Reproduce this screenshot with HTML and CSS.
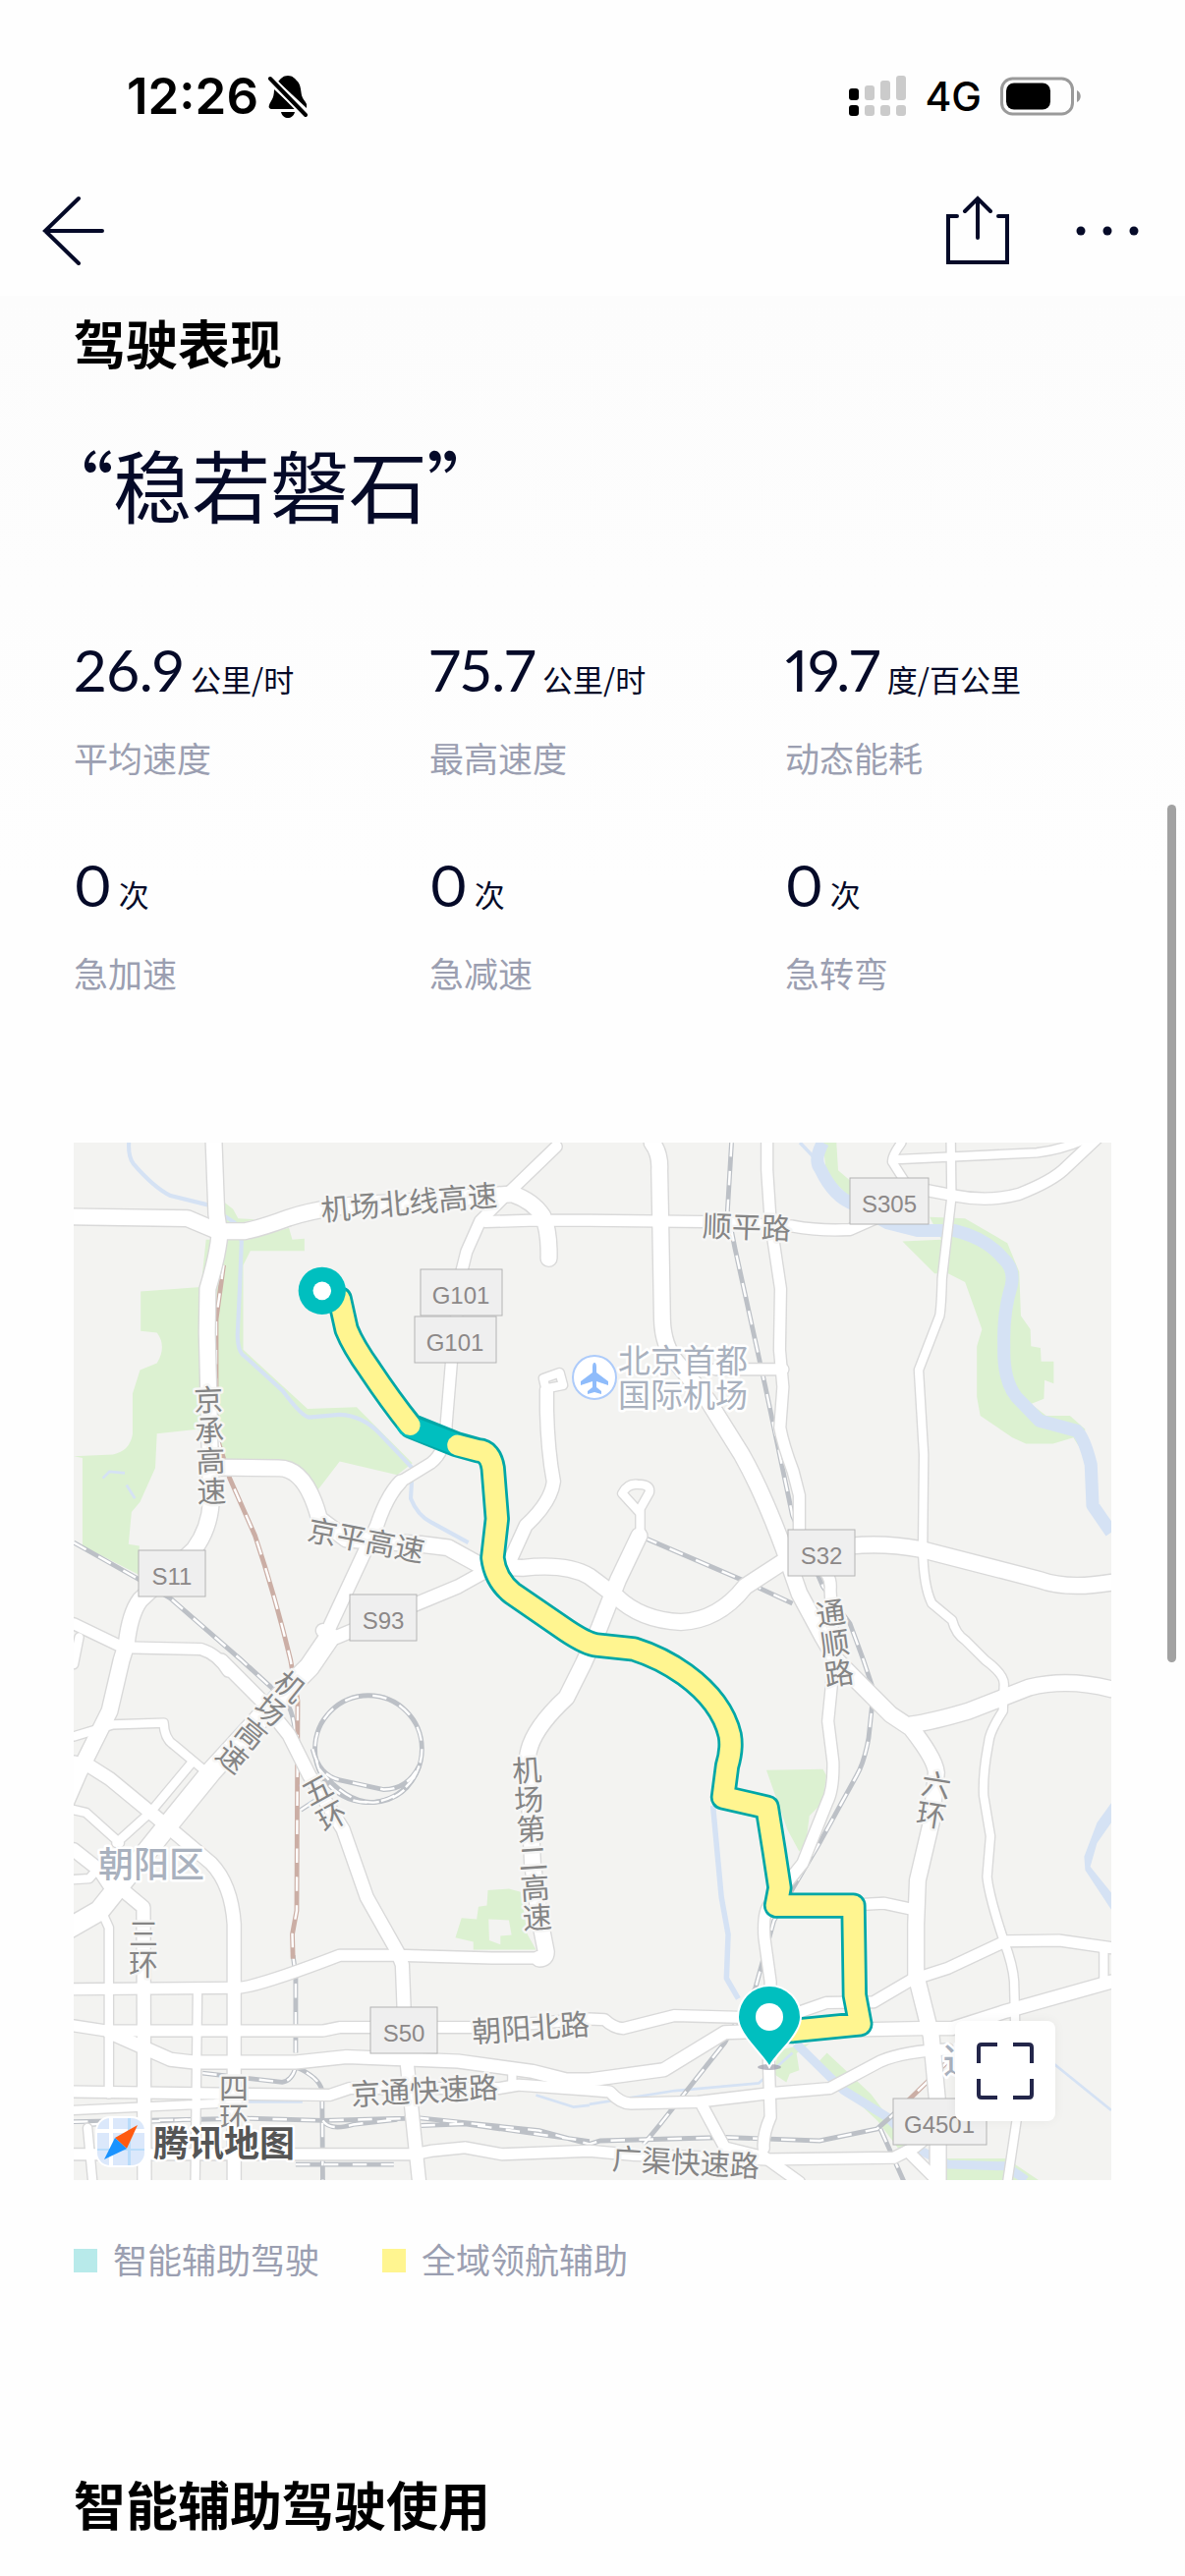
FILE: index.html
```html
<!DOCTYPE html>
<html lang="zh-CN">
<head>
<meta charset="utf-8">
<meta name="viewport" content="width=device-width, initial-scale=1">
<title>驾驶表现</title>
<link rel="stylesheet" href="styles.css">
</head>
<body>
<header class="top">
  <div class="status">
    <div class="status-left">
      <span class="clock">12:26</span>
      <svg class="bell" viewBox="0 0 40 44" aria-hidden="true">
        <path d="M10 7C13 4 15 1 20 1s7 3 10 6c3 4 3 8 4 14 1 4 4 6 5 9v4L10 7z"/>
        <path d="M6 15l22 20H4c-3 0-4-2-3-4 1-4 5-6 5-16zM13 38h14c-1 4-4 6-7 6s-6-2-7-6z"/>
        <path class="bell-gap" d="M2 4l36 37"/>
        <path class="bell-slash" d="M2 4l36 37"/>
      </svg>
    </div>
    <div class="status-right">
      <svg class="signal" viewBox="0 0 58 42" aria-hidden="true">
        <g fill="#000"><rect y="13" width="10" height="12" rx="3"/><rect y="30" width="10" height="11" rx="3"/></g>
        <g fill="#cbcbcb"><rect x="16" y="10" width="10" height="15" rx="3"/><rect x="16" y="30" width="10" height="11" rx="3"/><rect x="32" y="5" width="10" height="20" rx="3"/><rect x="32" y="30" width="10" height="11" rx="3"/><rect x="48" width="10" height="25" rx="3"/><rect x="48" y="30" width="10" height="11" rx="3"/></g>
      </svg>
      <span class="network">4G</span>
      <svg class="battery" viewBox="0 0 82 40" aria-hidden="true">
        <rect x="1.5" y="2" width="72" height="36" rx="11" fill="none" stroke="#9a9a9a" stroke-width="3"/>
        <rect x="6" y="6.5" width="45" height="27" rx="8"/>
        <path d="M78 14c5 2 5 10 0 12z" fill="#9a9a9a"/>
      </svg>
    </div>
  </div>
  <nav class="nav">
    <button class="icon-btn" type="button" aria-label="返回">
      <svg width="64" height="72" viewBox="0 0 64 72"><path d="M38 3L4 36l34 33M4 36h58"/></svg>
    </button>
    <div class="nav-actions">
      <button class="icon-btn" type="button" aria-label="分享">
        <svg width="66" height="72" viewBox="0 0 66 72"><path d="M12 21H3v47h60V21H54M33 43V4M20 16L33 3l13 13"/></svg>
      </button>
      <button class="icon-btn" type="button" aria-label="更多">
        <svg width="66" height="72" viewBox="0 0 66 72"><g class="dots"><circle cx="6" cy="36" r="4.5"/><circle cx="33" cy="36" r="4.5"/><circle cx="60" cy="36" r="4.5"/></g></svg>
      </button>
    </div>
  </nav>
</header>

<main class="page">
  <h1 class="heading">驾驶表现</h1>
  <p class="verdict">“稳若磐石”</p>

  <dl class="stats">
    <div class="stat"><dt>平均速度</dt><dd>26.9<small>公里/时</small></dd></div>
    <div class="stat"><dt>最高速度</dt><dd>75.7<small>公里/时</small></dd></div>
    <div class="stat"><dt>动态能耗</dt><dd>19.7<small>度/百公里</small></dd></div>
    <div class="stat"><dt>急加速</dt><dd>0<small>次</small></dd></div>
    <div class="stat"><dt>急减速</dt><dd>0<small>次</small></dd></div>
    <div class="stat"><dt>急转弯</dt><dd>0<small>次</small></dd></div>
  </dl>

  <section class="map" aria-label="行程地图">
    <svg class="map-canvas" viewBox="0 0 1056 1056">
      <defs>
        <g id="roads">
          <g class="w22">
            <path d="M2636 38L2638 200L2610 440Q2608 520 2603 550L2541 710L2556 960L2553 1240Q2555 1350 2580 1400L2640 1450Q2650 1490 2680 1510L2738 1568Q2795 1610 2793 1640L2790 1718Q2750 1780 2748 1810Q2730 1900 2733 1968L2753 2088L2743 2208Q2750 2270 2793 2398Q2820 2470 2823 2518L2826 2638L2830 2930L2803 3110"/>
            <path d="M2490 38Q2460 80 2463 95L2498 150M2473 88L2890 68Q2960 60 3030 30"/>
            <path d="M44 1793L160 1758L310 1753Q312 1800 340 1818L430 1893"/>
            <path d="M395 1868L270 2018L170 2108M44 2010L80 2018L180 2108M44 2216L90 2213L120 2178"/>
            <path d="M130 2318L148 2358V2850M410 2536L408 2698L403 3110M44 2898L460 2878L530 2868M1340 2783V2828M85 2950L100 3110M60 1500L44 1580"/>
            <path d="M1715 1130L1665 1075Q1680 1045 1710 1048Q1750 1048 1745 1072L1718 1120V1200"/>
            <path d="M1440 770L1432 735L1480 718L1490 755L1440 765"/>
            <path d="M3088 2430V2520"/>
          </g>
          <g class="w30">
            <path d="M44 2648L140 2663L780 2663L830 2653L1250 2653L1568 2628L1613 2630Q1640 2655 1668 2656L1818 2618L2008 2623L2188 2608L2268 2580L2408 2578L2518 2513L2628 2478L2798 2398L2958 2396L3110 2418"/>
            <path d="M44 2843L800 2853L860 2833L1300 2833L1360 2823L1568 2838L1628 2843Q1660 2878 1690 2878L1888 2873L2098 2848L2278 2833L2428 2753Q2500 2723 2628 2718"/>
            <path d="M44 2540L520 2536Q570 2540 830 2440L1000 2440L1280 2448H1440"/>
            <path d="M44 3028H1050L1100 3018L1200 3008L1310 3028L1568 3018L1700 3030L2088 3043L2468 3038L2528 3008L2600 2950"/>
            <path d="M1898 2878L1968 3008L2088 3038L2188 3110M2508 3018L2600 3110"/>
            <path d="M2368 2290L2438 2286L2518 2303M1940 708H2140"/>
            <path d="M2093 38L2093 120L2103 270L2133 470L2130 650L2140 760L2131 880Q2140 930 2170 1010L2188 1080V1220L2240 1290Q2285 1310 2280 1360L2290 1560L2283 1648L2273 1748L2288 1868Q2290 1950 2270 1988L2198 2168L2100 2290Q2080 2310 2085 2388L2103 2518L2098 2758L2103 2918Q2080 2970 2083 3010"/>
            <path d="M1260 272L1390 268H1568L1908 272L2168 285Q2250 300 2338 295L2440 250M2560 178L2648 195Q2748 215 2838 190Q2940 150 2978 110L3068 25"/>
            <path d="M1470 50L1330 185L1245 270L1205 360L1190 420L1160 690L1145 870Q1145 950 1100 985L1010 1040"/>
            <path d="M44 1460L190 1530L420 1535Q470 1550 500 1600"/>
          </g>
          <g class="w38">
            <path d="M190 2248L250 2298L253 3110"/>
            <path d="M44 1870L90 1880L150 1918L320 2058L450 2168Q510 2230 518 2348V3110"/>
            <path d="M150 2668L330 2748L400 2756L700 2756L850 2740L1180 2753L1400 2783L1500 2808H1568L1788 2778L1968 2668L2028 2666L2548 2656L2640 2656L2800 2605L3110 2518"/>
            <path d="M1010 1040Q970 1080 940 1170L800 1470M1270 1300L1180 1350L1060 1400L820 1500L780 1480"/>
            <path d="M480 1568L600 1688L680 1788L740 1908L840 2068L910 2268L1000 2428L1015 2468L1020 2598L1030 2768L1050 2968L1065 3110"/>
            <path d="M44 2128L120 2188L160 2248"/>
            <path d="M1442 770V830Q1445 950 1462 1040Q1455 1100 1380 1170L1330 1280"/>
          </g>
          <g class="w46">
            <path d="M458 38L466 250L475 310Q470 370 440 470L438 600L442 760L450 1100Q445 1180 400 1240L240 1390Q210 1430 200 1520L185 1568L150 1718L60 1898L20 1990"/>
            <path d="M44 257L380 262L470 300H550Q600 290 680 260Q800 220 1000 215L1340 190Q1400 210 1430 255Q1450 300 1448 380"/>
            <path d="M1753 38Q1778 70 1775 120L1778 270L1783 560Q1785 640 1828 690L1918 800L2018 960Q2080 1070 2143 1240L2188 1370L2258 1500L2298 1568L2358 1628L2458 1728L2518 1768Q2590 1860 2593 1900L2578 2048L2538 2218L2533 2348L2533 2498L2558 2598L2578 2678L2598 2888V3110"/>
            <path d="M3110 1338Q2980 1360 2898 1330L2548 1240Q2440 1220 2340 1230L2143 1275L2028 1350Q1950 1450 1838 1455Q1720 1450 1648 1380L1568 1320Q1500 1280 1370 1295L1250 1290L1150 1235L1070 1225L850 1210L770 1150Q730 1000 650 1000L480 998"/>
            <path d="M1715 1200L1653 1330L1598 1470L1550 1578L1500 1678Q1390 1780 1385 1858L1400 2168L1420 2328L1440 2430Q1440 2450 1420 2450"/>
            <path d="M2518 1758Q2580 1750 2688 1718L2868 1648Q2980 1620 3110 1653"/>
          </g>
          <g class="w60"><path d="M800 1500L740 1588L660 1668L450 1898L320 2058L200 2208L120 2308L30 2360"/></g>
        </g>
        <g id="rails">
          <path d="M1988 38L1976 240L1998 350L2088 760L2168 1140L2258 1350L2338 1460L2378 1568L2408 1658L2393 1798Q2380 1870 2358 1908L2248 2108L2113 2338L2058 2538L1968 2698L1778 2938L1728 2998"/>
          <path d="M44 1220L230 1325L330 1385L540 1568L650 1668Q695 1700 700 1800V1828"/>
          <path d="M1728 1205L2018 1330L2168 1400"/>
          <circle cx="915" cy="1830" r="158"/>
          <path d="M750 1830Q770 1910 830 1922L960 1950Q1030 1950 1065 1880M770 1890Q850 1990 930 1988Q1030 1980 1065 1880M715 2010L780 1968"/>
          <path d="M692 2440L700 2498V2728M425 2788L660 2815Q690 2810 700 2770Q770 2800 778 2840L780 3110"/>
          <path d="M44 2932L560 2922L780 2928L1020 2922L1060 2920L1420 2958L1568 2998L1600 2988L1968 2978L2248 2988L2418 2953L2478 2900M1070 2943L1200 2938L1568 2990M2428 2953L2498 3110M700 3058H990M780 2928Q800 2960 870 2940L1000 2925M90 2940L380 2925"/>
        </g>
        <g id="rails-red">
          <path d="M487 400L465 560V900L505 1030L580 1200Q640 1380 685 1568L706 1688L703 2308L690 2378L692 2450"/>
          <path d="M2478 2900L2560 2820L2640 2740"/>
        </g>
      </defs>

      <rect class="land" width="1056" height="1056"/>
      <g transform="scale(.3444) translate(-44 -38)">
        <g class="park">
          <path d="M435 325H560L680 290L690 325L726 322V358H566L545 400V650L735 825L880 820L1045 985L1000 1020L830 980L765 1065L700 1000L480 975L410 885L290 898L285 1000L240 1100L215 1130L206 1225L238 1230L236 1315L70 1230V970L44 965L160 960Q210 950 218 900V780L240 710L290 690Q320 640 290 600L242 595V478L420 465z"/>
          <path d="M490 215L515 235L530 262L580 265L480 290z"/>
          <path d="M2258 38H2298L2303 120L2338 150V200L2268 130zM2573 258L2678 262L2803 335L2838 420L2843 550L2871 590L2873 640L2901 645L2903 685H2940V750L2913 740L2911 795L2873 810L2918 845H2988L3033 885L3023 950L2998 910L2938 928H2858L2818 910L2723 845L2713 790V640L2728 590L2678 450L2628 425H2588L2493 330L2608 325z"/>
          <path d="M2091 1893L2258 1890L2268 1908L2258 1988L2218 2028L2208 2108L2188 2133L2153 2068L2128 1998z"/>
          <path fill-rule="evenodd" d="M1268 2248L1330 2243L1365 2253L1385 2378L1410 2423H1225V2400L1172 2388L1190 2330L1235 2333L1240 2296L1265 2293zM1270 2333L1330 2336L1338 2380L1305 2383V2408L1272 2396z"/>
          <path d="M2128 2720L2220 2700L2180 2730L2188 2780L2160 2790L2150 2815L2112 2790zM2270 2728L2400 2850L2490 2970L2530 3000L2480 3010L2420 2930L2240 2760zM2626 3040H2800L2895 3104H2610z"/>
        </g>
        <g class="water">
          <path stroke-width="12" d="M207 38Q205 80 220 100Q280 170 330 195L440 222L520 275L540 330L535 460L528 610Q530 660 550 670L660 770Q720 850 740 850L830 842Q900 845 950 900L1045 1000L1040 1090Q1060 1140 1100 1160L1210 1220"/>
          <path stroke-width="38" d="M2258 38Q2230 90 2250 115Q2290 200 2350 220L2448 275L2540 298H2648Q2740 320 2790 380Q2825 410 2815 460Q2790 540 2793 640Q2790 740 2830 790L2898 860L3008 890Q3030 910 3050 990L3055 1110L3110 1190"/>
          <path stroke-width="10" d="M2190 38L2235 85"/>
          <path stroke-width="16" d="M1933 1998L1958 2268L1978 2378L1973 2508L2008 2568"/>
          <path stroke-width="26" d="M2178 2700L2318 2838L2448 2918L2548 3018L2628 3058L2798 3063L2858 3104"/>
          <path stroke-width="8" d="M1568 2880L1820 2840L2068 2818L2168 2728M2940 2760L3110 2898M1410 2853L1520 2888L1568 2883M560 2873H720M130 1030L150 1010L195 1015M200 1050L225 1090"/>
          <path class="lake" d="M3110 1990L3068 2048L3030 2148L3033 2188L3110 2305V2255L3048 2178L3068 2108L3110 2048z"/>
        </g>
        <use href="#rails" class="rail-edge"/><use href="#rails" class="rail-dash"/>
        <use href="#rails-red" class="rail-edge red"/><use href="#rails-red" class="rail-dash"/>
        <use href="#roads" class="road-edge"/><use href="#roads" class="road-fill"/>

        <path class="route-edge" d="M830 500L850 590Q870 640 920 710Q980 800 1040 875L1175 930L1240 948Q1275 950 1283 1000L1295 1150L1282 1265Q1290 1330 1340 1370L1500 1480Q1560 1520 1590 1523L1700 1535Q1780 1560 1850 1610Q1960 1690 1983 1790Q1990 1830 1975 1880L1963 1973L2093 2003L2113 2128L2130 2240L2120 2293H2348L2352 2558L2368 2643L2170 2663L2140 2663"/>
        <path class="route-body" d="M1030 875L1180 932"/>
        <g class="route-pilot">
          <path d="M830 500L850 590Q870 640 920 710Q980 800 1038 873"/>
          <path d="M1178 932L1240 948Q1275 950 1283 1000L1295 1150L1282 1265Q1290 1330 1340 1370L1500 1480Q1560 1520 1590 1523L1700 1535Q1780 1560 1850 1610Q1960 1690 1983 1790Q1990 1830 1975 1880L1963 1973L2093 2003L2113 2128L2130 2240L2120 2293H2348L2352 2558L2368 2643L2170 2663L2140 2663"/>
        </g>
        <circle class="teal" cx="778" cy="476" r="70"/><circle cx="778" cy="476" r="27" fill="#fff"/>
      </g>

      <g class="shield">
        <g><rect x="353" y="129" width="83" height="47"/><text x="394" y="164">G101</text></g>
        <g><rect x="347" y="177" width="83" height="47"/><text x="388" y="212">G101</text></g>
        <g><rect x="66" y="415" width="68" height="47"/><text x="100" y="450">S11</text></g>
        <g><rect x="281" y="460" width="68" height="47"/><text x="315" y="495">S93</text></g>
        <g><rect x="790" y="36" width="80" height="47"/><text x="830" y="71">S305</text></g>
        <g><rect x="727" y="394" width="68" height="47"/><text x="761" y="429">S32</text></g>
        <g><rect x="302" y="880" width="68" height="47"/><text x="336" y="915">S50</text></g>
        <g><rect x="834" y="973" width="95" height="47"/><text x="881" y="1008">G4501</text></g>
      </g>

      <g class="road-name">
        <text transform="translate(341 59) rotate(-5)">机场北线高速</text>
        <text transform="translate(685 84) rotate(2)">顺平路</text>
        <text transform="translate(298 403) rotate(11)">京平高速</text>
        <text transform="translate(465 899) rotate(-4)">朝阳北路</text>
        <text transform="translate(357 963) rotate(-3)">京通快速路</text>
        <text transform="translate(623 1036) rotate(3)">广渠快速路</text>
        <text transform="translate(137 260) rotate(-2)" x="0 0 0 0" y="0 31 62 93">京承高速</text>
        <text transform="translate(770 477) rotate(-8)" x="0 0 0" y="0 31 62">通顺路</text>
        <text transform="translate(221 552) rotate(39)" x="0 0 0 0" y="0 31 62 93">机场高速</text>
        <text transform="translate(247 657) rotate(-29)" x="0 0" y="0 31">五环</text>
        <text transform="translate(461 637) rotate(-4)" x="0 0 0 0 0 0" y="0 30 60 90 120 150">机场第二高速</text>
        <text x="71 71" y="803 834">三环</text>
        <text x="163 163" y="960 990">四环</text>
        <text transform="translate(878 652) rotate(9)" x="0 0" y="0 31">六环</text>
      </g>
      <g class="place-name">
        <text x="554" y="220">北京首都</text>
        <text x="554" y="255">国际机场</text>
        <text class="district" x="25" y="732">朝阳区</text>
        <text class="district" x="885" y="932">通</text>
      </g>

      <g transform="translate(530 239)">
        <circle r="22" fill="#fff" stroke="#adcbfa" stroke-width="2"/>
        <path fill="#8fbcfb" d="M0-15q2 0 2 5v5l12 9v4L2 4v6l5 4v3L0 15l-7 2v-3l5-4V4l-12 4V4l12-9v-5q0-5 2-5z"/>
      </g>

      <g transform="translate(708 39)">
        <ellipse cx="0" cy="902" rx="12" ry="3" fill="#9a9aa8" opacity=".7"/>
        <path class="pin" d="M0 900C-8 886-31 868-31 851a31 31 0 0 1 62 0C31 868 8 886 0 900z"/>
        <circle cy="851" r="14" fill="#fff"/>
      </g>

      <g class="provider">
        <rect x="22" y="991" width="52" height="52" rx="15" fill="#fff"/>
        <rect x="24" y="993" width="48" height="48" rx="13" fill="#dbe8fb"/>
        <g stroke="none">
          <path d="M36 993h4v48h-4zM24 1004h48v4H24z" fill="#fff"/>
          <path d="M24 1024h48v2H24zM55 993h3v48h-3z" fill="#b9dcfa"/>
        </g>
        <path d="M65 1000L42 1013L54 1024z" fill="#ff5a10"/>
        <path d="M31 1035L42 1013L54 1024z" fill="#1a93ff"/>
        <text x="81" y="1016">腾讯地图</text>
      </g>
    </svg>
    <button class="expand" type="button" aria-label="全屏">
      <svg width="58" height="58" viewBox="0 0 58 58"><path d="M2 21V5q0-3 3-3h16M37 2h16q3 0 3 3v16M56 37v16q0 3-3 3H37M21 56H5q-3 0-3-3V37"/></svg>
    </button>
  </section>

  <ul class="legend">
    <li><span class="swatch assist"></span>智能辅助驾驶</li>
    <li><span class="swatch pilot"></span>全域领航辅助</li>
  </ul>

  <h2 class="heading heading-next">智能辅助驾驶使用</h2>
  <div class="scroll-thumb"></div>
</main>
</body>
</html>
```
FILE: styles.css
```css
* { box-sizing: border-box; }

body {
  margin: 0;
  background: #fefefe;
  color: #050a28;
  font-family: "Noto Sans", "Noto Sans CJK SC", sans-serif;
}

h1, h2, p, dl, dd, ul { margin: 0; padding: 0; }

/* Header */
.top { background: #fefefe; }

.status {
  display: flex;
  justify-content: space-between;
  align-items: center;
  height: 169px;
  padding: 27px 106px 0 129px;
  color: #000;
  font-family: Inter, sans-serif;
}

.status-left { display: flex; align-items: center; gap: 10px; }
.status-right { display: flex; align-items: center; gap: 19px; }
.clock { font-size: 51px; font-weight: 600; line-height: 60px; }
.network { font-size: 41px; font-weight: 500; line-height: 60px; }
.bell { width: 40px; height: 44px; }
.bell-gap { stroke: #fefefe; stroke-width: 8; }
.bell-slash { stroke: #000; stroke-width: 4; stroke-linecap: round; }
.signal { width: 58px; height: 42px; }
.battery { width: 82px; height: 40px; }

.nav {
  display: flex;
  justify-content: space-between;
  align-items: center;
  height: 132px;
  padding: 0 46px 0 42px;
}

.nav-actions { display: flex; gap: 66px; }

.icon-btn {
  display: flex;
  padding: 0;
  border: 0;
  background: none;
  fill: none;
  stroke: #050a28;
  stroke-width: 4;
  stroke-linecap: round;
}

.dots { fill: #050a28; stroke: none; }

/* Content */
.page {
  position: relative;
  padding: 12px 75px 33px;
  background: linear-gradient(#fcfcfc, #fefefe 600px);
}

.heading {
  color: #000;
  font-size: 53px;
  font-weight: 700;
  line-height: 76px;
}

.heading-next { margin-top: 186px; }

.verdict {
  margin-top: 46px;
  font-family: "Noto Sans CJK SC", sans-serif;
  font-feature-settings: "palt";
  font-size: 80px;
  line-height: 112px;
}

.stats {
  display: grid;
  grid-template-columns: repeat(3, 1fr);
  row-gap: 66px;
  margin: 99px -30px 0 0;
}

.stat { display: flex; flex-direction: column-reverse; gap: 29px; }

.stat dt {
  color: #9b9fb1;
  font-size: 35px;
  line-height: 52px;
}

.stat dd {
  display: flex;
  align-items: baseline;
  gap: 7px;
  height: 72px;
  font-family: Lato, sans-serif;
  font-size: 59px;
  font-variant-numeric: proportional-nums;
  line-height: 72px;
}

.stat small {
  font-family: "Noto Sans CJK SC", sans-serif;
  font-size: 31px;
  line-height: 40px;
}

/* Map */
.map { position: relative; margin-top: 145px; }
.map-canvas { display: block; width: 100%; height: auto; overflow: hidden; }
.land { fill: #f3f3f1; }
.park { fill: #dcf1d1; }
.water { fill: none; stroke: #d5e2f4; stroke-linejoin: round; }
.water .lake { fill: #d5e2f4; stroke: none; }

.w22 { --lane: 24px; }
.w30 { --lane: 32px; }
.w38 { --lane: 38px; }
.w46 { --lane: 46px; }
.w60 { --lane: 58px; }

#roads path {
  fill: none;
  stroke-width: calc(var(--lane) + var(--edge));
  stroke-linejoin: round;
  stroke-linecap: round;
}

.road-edge { --edge: 8px; stroke: #d9d9d9; }
.road-fill { --edge: 0px; stroke: #fff; }
.rail-edge { fill: none; stroke: #bcc0c6; stroke-width: 14; }
.rail-edge.red { stroke: #cbaea5; }
.rail-dash { fill: none; stroke: #fff; stroke-width: 7; stroke-dasharray: 42 42; }

.route-edge, .route-body, .route-pilot { fill: none; stroke-linejoin: round; stroke-linecap: round; }
.route-edge { stroke: #00a7a7; stroke-width: 76; }
.route-body { stroke: #00bfbf; stroke-width: 62; }
.route-pilot { stroke: #fff590; stroke-width: 60; }
.teal { fill: #00bfbf; }
.pin { fill: #00bfbf; stroke: #fff; stroke-width: 4; paint-order: stroke; }

.shield rect { fill: #efefef; stroke: #b4b4b4; stroke-width: 1; }

.shield text {
  fill: #8c8888;
  font-family: "Liberation Sans", sans-serif;
  font-size: 24px;
  text-anchor: middle;
}

.road-name, .place-name, .provider {
  font-family: "Noto Sans CJK SC", sans-serif;
  dominant-baseline: central;
  paint-order: stroke;
  stroke: #f6f6f5;
  stroke-width: 5;
  stroke-linejoin: round;
}

.road-name { fill: #858585; font-size: 30px; text-anchor: middle; }
.place-name { fill: #a9b1be; font-size: 33px; stroke: #fff; }
.place-name .district { font-size: 36px; font-weight: 500; }
.provider rect, .provider path { stroke: none; }
.provider text { fill: #555; font-size: 36px; font-weight: 700; stroke: #fff; }

.expand {
  position: absolute;
  right: 57px;
  bottom: 60px;
  display: grid;
  place-items: center;
  width: 102px;
  height: 102px;
  padding: 0;
  border: 0;
  border-radius: 8px;
  background: #fff;
  box-shadow: 0 0 12px rgba(0, 0, 0, .05);
  fill: none;
  stroke: #23264a;
  stroke-width: 4;
}

/* Legend */
.legend {
  display: flex;
  gap: 64px;
  margin-top: 56px;
  color: #9b9fb1;
  font-size: 35px;
  line-height: 52px;
  list-style: none;
}

.legend li { display: flex; align-items: center; gap: 16px; }
.swatch { width: 24px; height: 24px; }
.swatch.assist { background: #b8eaea; }
.swatch.pilot { background: #fff590; }

.scroll-thumb {
  position: absolute;
  top: 518px;
  right: 9px;
  width: 9px;
  height: 873px;
  border-radius: 5px;
  background: #a2a2a2;
}
```
